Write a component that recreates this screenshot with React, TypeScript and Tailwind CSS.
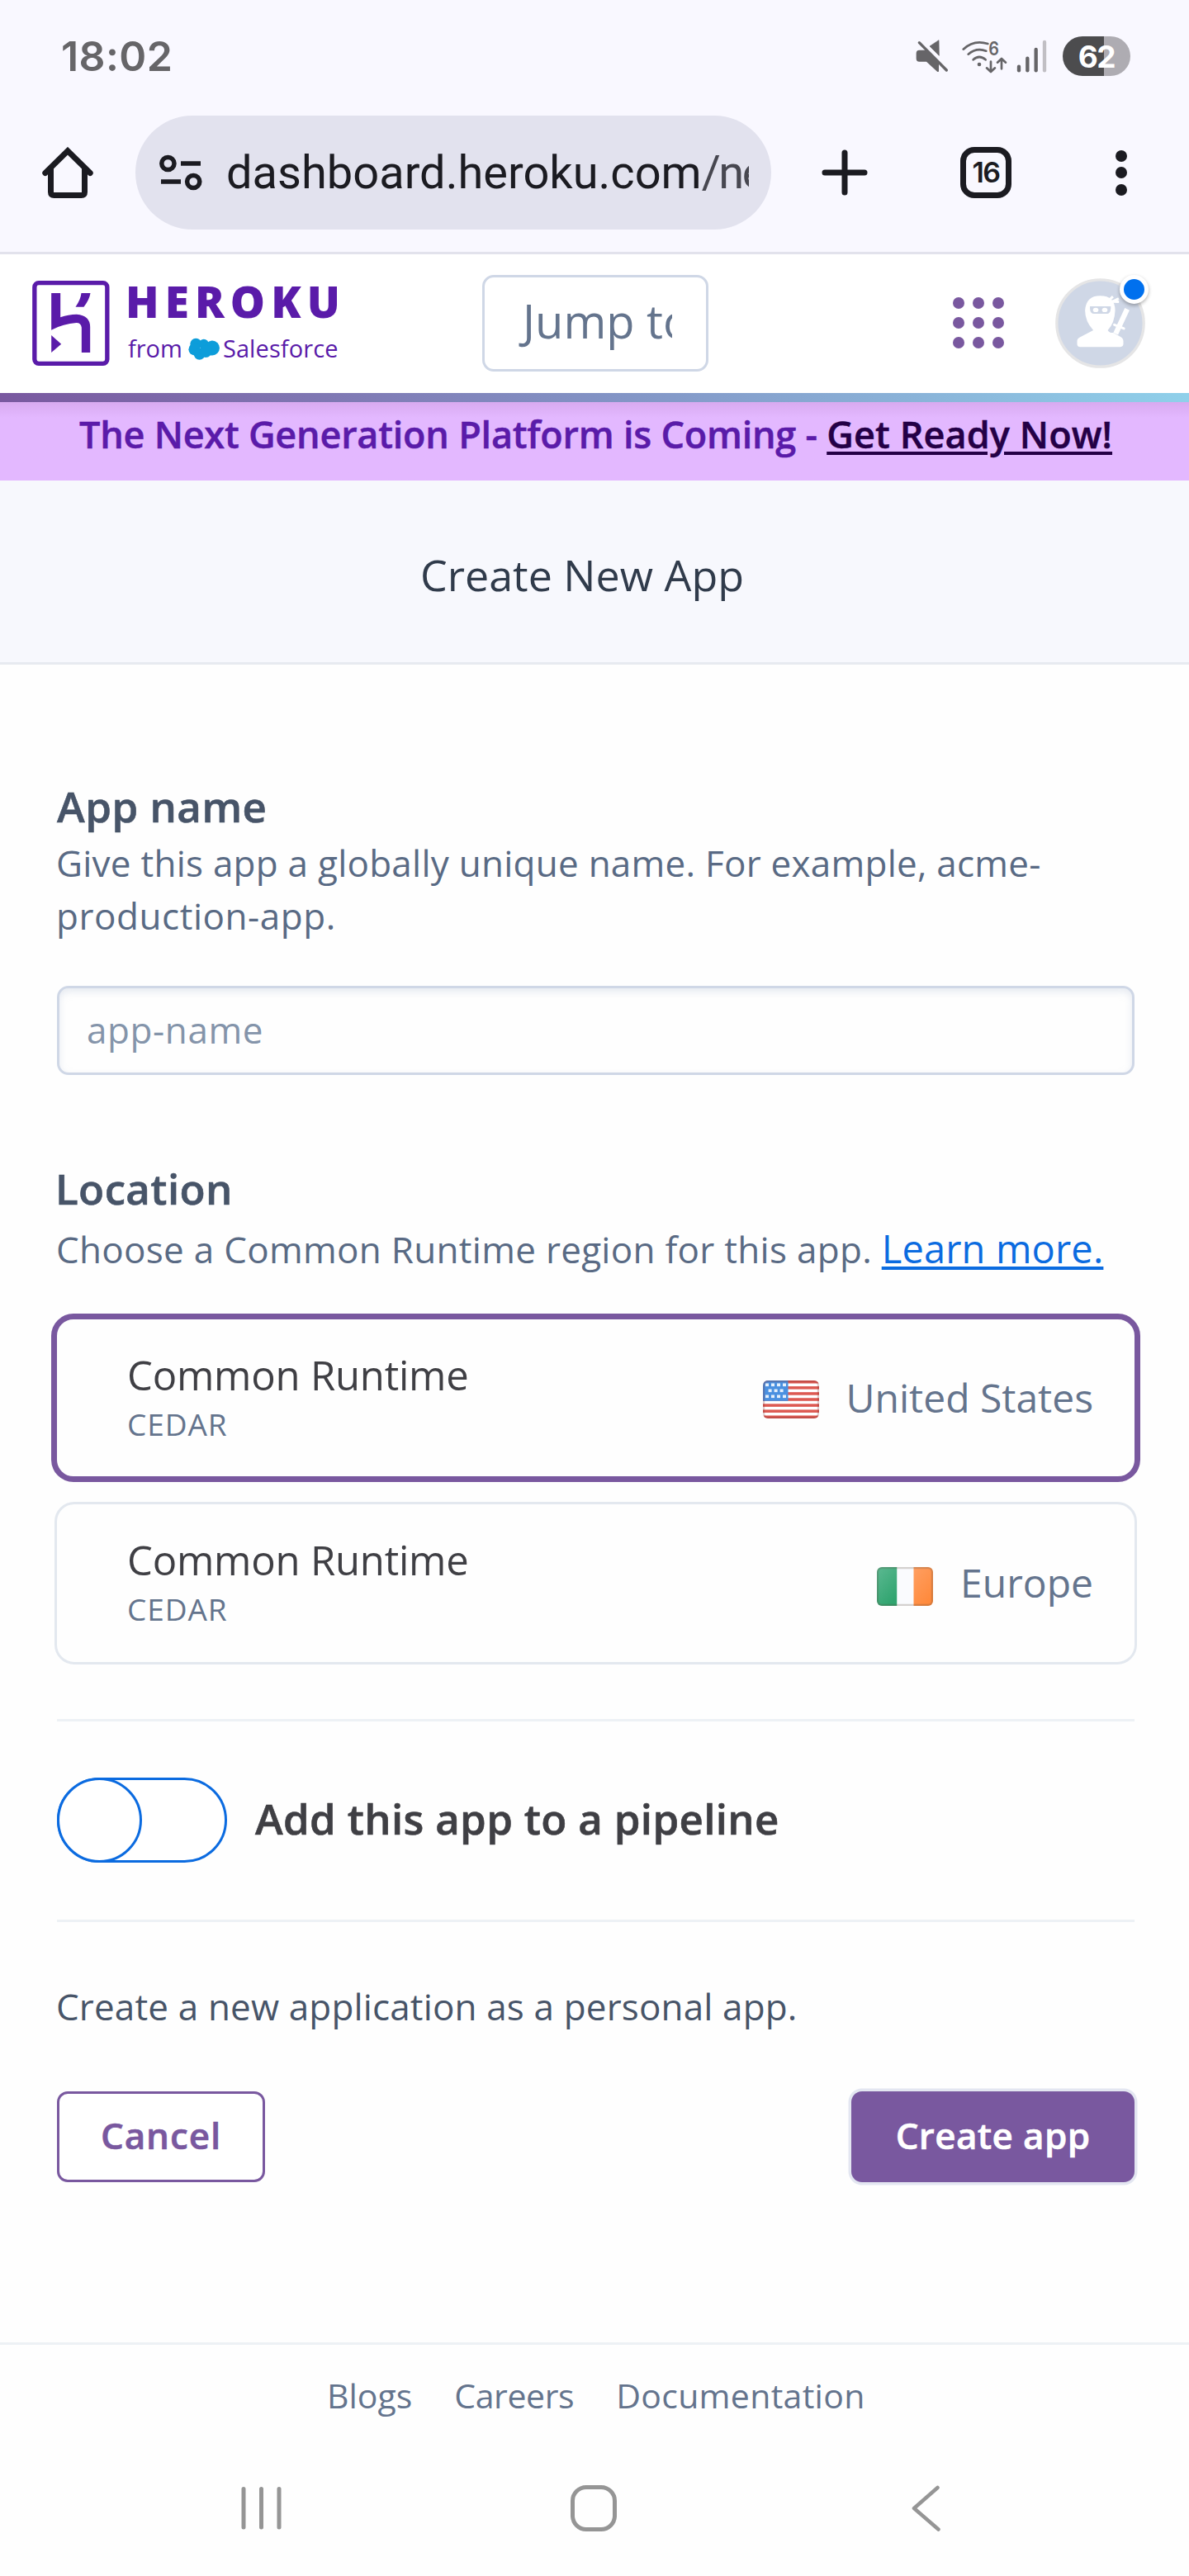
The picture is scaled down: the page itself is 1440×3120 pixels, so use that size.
import type { ReactNode } from 'react';

function MuteIcon() {
  return (
    <svg className="h-[40px] w-[40px]" viewBox="27 54 120 120" fill="#666568">
      <path d="M111 56 L78 78 L112 112 Z" stroke="#666568" strokeWidth="2" strokeLinejoin="round" />
      <path d="M40 92 H66 L111 138 V170 L106 171 L66 134 H40 Q29 134 29 122 V104 Q29 92 40 92 Z" />
      <path d="M40 65 L139 165" stroke="#666568" strokeWidth="10" strokeLinecap="round" />
    </svg>
  );
}

function WifiIcon() {
  return (
    <svg className="h-[41px] w-[55px] overflow-visible" viewBox="195 51 165 123" fill="none" stroke="#666568" strokeWidth="8" strokeLinecap="round" strokeLinejoin="round">
      <path d="M200 86 Q238 50 289 66" />
      <path d="M218 104 Q248 78 283 92" />
      <path d="M236 124 Q258 104 281 124" />
      <circle cx="258" cy="141" r="7" fill="#666568" stroke="none" />
      <text x="292" y="107" fill="#666568" stroke="none" fontFamily="Inter, sans-serif" fontWeight="600" fontSize="68" textLength="38" lengthAdjust="spacingAndGlyphs">6</text>
      <path d="M300 131 V167 M285 154 L300 168 L315 154" />
      <path d="M339 157 V120 M324 134 L339 120 L354 134" />
    </svg>
  );
}

function SignalIcon() {
  return (
    <svg className="h-[40px] w-[37px]" viewBox="393 52 111 120" stroke="#666568" strokeWidth="13" strokeLinecap="round">
      <path d="M402 150 V164" />
      <path d="M433 120 V164" />
      <path d="M464 88 V164" />
      <path d="M495 61 V164" stroke="#c1bfc4" />
    </svg>
  );
}

function StatusBar() {
  return (
    <div className="flex h-[136px] items-center pr-[71px] pl-[74px]">
      <span className="flex-1 font-[Inter,sans-serif] text-[50px] leading-none font-semibold tracking-[0.4px] text-[#666568]">18:02</span>
      <MuteIcon />
      <span className="ml-[16px]"><WifiIcon /></span>
      <span className="ml-[11px]"><SignalIcon /></span>
      <span className="ml-[19px] flex h-[48px] w-[82px] items-center justify-center rounded-full bg-linear-to-r from-[#4c4c4e] from-61% to-[#aeacb2] to-61% font-[Inter,sans-serif] text-[37px] leading-none font-bold tracking-[-1.5px] text-white">
        62
      </span>
    </div>
  );
}

function BrowserBar() {
  return (
    <div className="mt-[4px] flex h-[138px] items-center pl-[51px]">
      <svg className="h-[62px] w-[62px] shrink-0" viewBox="0 0 62 62" fill="none" stroke="#1b1b21" strokeWidth="7">
        <path d="M3.8 31.5 L31 4.8 L58.2 31.5" strokeLinecap="round" />
        <path d="M10.5 25 V54.5 Q10.5 58.5 14.5 58.5 H47.5 Q51.5 58.5 51.5 54.5 V25" />
      </svg>
      <div className="ml-[51px] flex h-[138px] w-[770px] items-center rounded-full bg-[#e2e2ee] pl-[29px]">
        <svg className="h-[44px] w-[53px] shrink-0" viewBox="0 0 53 44" fill="none" stroke="#1b1b21" strokeWidth="5.5">
          <circle cx="10.4" cy="11" r="7.6" />
          <path d="M26 11 H50 M2 33 H26" />
          <circle cx="41.2" cy="33" r="7.6" />
        </svg>
        <div className="ml-[28px] w-[633px] overflow-hidden font-[Roboto,sans-serif] text-[56px] leading-[80px] whitespace-nowrap text-[#1b1b21]">
          dashboard.heroku.com<span className="tracking-[-2.5px] text-[#474750]">/ne</span>
        </div>
      </div>
      <svg className="ml-[61px] h-[56px] w-[56px] shrink-0" viewBox="0 0 56 56" stroke="#1b1b21" strokeWidth="7" strokeLinecap="round">
        <path d="M28 4 V52 M4 28 H52" />
      </svg>
      <div className="ml-[112px] flex h-[62px] w-[62px] shrink-0 items-center justify-center rounded-[17px] border-[7px] border-[#1b1b21] font-[Inter,sans-serif] text-[34px] leading-none font-semibold tracking-[-1.5px] text-[#1b1b21]">
        16
      </div>
      <div className="ml-[126px] flex flex-col gap-[6.5px]">
        {[0, 1, 2].map((i) => (
          <span key={i} className="size-[14px] rounded-full bg-[#1b1b21]" />
        ))}
      </div>
    </div>
  );
}

function HerokuLogo() {
  return (
    <>
      <svg className="ml-[39px] h-[103px] w-[94px] shrink-0" viewBox="27 42 281 309" fill="#5a1ba9">
        <rect x="35" y="50" width="264" height="293" rx="15" fill="none" stroke="#5a1ba9" strokeWidth="16" />
        <path d="M96 87 H129 V175 Q158 164 188 164 Q237 168 237 210 V303 H206 V212 Q204 195 187 195 Q140 198 96 221 Z" />
        <path d="M96 240 L132 272 L96 303 Z" />
        <path d="M205 87 H238 Q234 112 214 137 H184 Q202 112 205 87 Z" />
      </svg>
      <div className="ml-[19px] flex flex-col pb-[4px] text-[#5a1ba9]">
        <span className="text-[53px] leading-[53px] font-extrabold tracking-[7.1px]">HEROKU</span>
        <div className="mt-[13px] ml-[3px] flex items-center text-[29px] leading-[36px]">
          <span>from</span>
          <svg className="ml-[7px] h-[27px] w-[38px]" viewBox="590 258 115 82" fill="#0d9dda">
            <circle cx="618" cy="281" r="21" />
            <circle cx="647" cy="281" r="18" />
            <circle cx="678" cy="296" r="27" />
            <circle cx="613" cy="301" r="22" />
            <circle cx="631" cy="318" r="21" />
            <circle cx="654" cy="308" r="23" />
          </svg>
          <span className="ml-[4px] tracking-[0.1px]">Salesforce</span>
        </div>
      </div>
    </>
  );
}

function NinjaAvatar() {
  return (
    <div className="relative ml-[62px] size-[109px] shrink-0">
      <svg className="size-[109px]" viewBox="533 917 329 329">
        <circle cx="697.5" cy="1081.5" r="159" fill="#cfd7e6" stroke="#e5e5e6" strokeWidth="10" />
        <path d="M672 1107 Q642 1075 642 1035 Q645 981 697 981 Q752 981 752 1035 Q750 1082 725 1107 Q731 1118 745 1116 L772 1131 Q782 1137 782 1147 V1158 Q781 1168 771 1168 H624 Q613 1168 613 1157 V1147 Q613 1138 623 1133 Z" fill="#fff" />
        <path d="M660 1020 H736 V1028 Q734 1047 722 1047 H675 Q661 1047 660 1028 Z" fill="#cfd7e6" />
        <ellipse cx="681" cy="1033" rx="10" ry="8" fill="#fff" />
        <ellipse cx="714" cy="1033" rx="10" ry="8" fill="#fff" />
        <path d="M731 996 L744 984 M738 1005 L765 991 M738 1002 L766 1003" stroke="#fff" strokeWidth="9" />
        <path d="M796 1030 L754 1120" stroke="#fff" strokeWidth="19" strokeLinejoin="round" />
        <path d="M749 1087 L784 1101" stroke="#fff" strokeWidth="9" strokeLinecap="round" />
      </svg>
      <span className="absolute top-[-4px] right-[-4px] size-[35px] rounded-full border-[5px] border-white bg-[#0070ee] shadow-[0_2px_4px_rgba(0,0,0,0.3)]" />
    </div>
  );
}

function HerokuNav() {
  return (
    <header>
      <div className="flex h-[168px] items-center bg-white pb-[2px]">
        <HerokuLogo />
        <div className="ml-auto flex items-center">
          <div className="flex h-[117px] w-[274px] items-center rounded-[14px] border-[3px] border-[#cfd7e6] bg-white pb-[6px] pl-[33px]">
            <div className="w-[194px] overflow-hidden pl-[13px] text-[56px] leading-[76px] whitespace-nowrap text-[#64748d]">Jump to</div>
          </div>
          <div className="ml-[296px] grid shrink-0 grid-cols-3 gap-[10px]">
            {Array.from({ length: 9 }, (_, i) => (
              <span key={i} className="size-[14px] rounded-full bg-[#79589f]" />
            ))}
          </div>
          <NinjaAvatar />
          <div className="w-[53px]" />
        </div>
      </div>
      <div className="h-[11px] bg-linear-to-r from-[#79589f] via-[#8292c4] to-[#8fd0ea]" />
    </header>
  );
}

function UsFlag() {
  return (
    <svg className="mt-[3px] h-[46px] w-[68px] overflow-hidden rounded-[6px]" viewBox="0 0 68 46">
      <rect width="68" height="46" fill="#fff" />
      {[0, 1, 2, 3, 4, 5, 6].map((i) => (
        <rect key={i} x="0" y={i * 7.08} width="68" height="3.54" fill="#dd5a52" />
      ))}
      <rect width="30.5" height="24.8" fill="#4a90e0" />
      {[3, 10, 17, 24].map((x) => (
        <g key={x} fill="#e6f0fb">
          <rect x={x} y="3.5" width="4" height="3.6" />
          <rect x={x} y="17.5" width="4" height="3.6" />
          {x < 24 && <rect x={x + 3.6} y="10.5" width="4" height="3.6" />}
        </g>
      ))}
      <rect x="1" y="1" width="66" height="44" rx="5" fill="none" stroke="#7a2a2a" strokeOpacity="0.25" strokeWidth="2.4" />
    </svg>
  );
}

function IrelandFlag() {
  return (
    <svg className="mt-[7px] h-[47px] w-[68px] overflow-hidden rounded-[6px]" viewBox="0 0 68 47">
      <defs>
        <linearGradient id="ie-green" x1="0" y1="0" x2="0.6" y2="1">
          <stop offset="0" stopColor="#5cb992" />
          <stop offset="1" stopColor="#30a46f" />
        </linearGradient>
        <linearGradient id="ie-orange" x1="0" y1="0" x2="0.6" y2="1">
          <stop offset="0" stopColor="#ff9f62" />
          <stop offset="1" stopColor="#ff8a3c" />
        </linearGradient>
      </defs>
      <rect width="24.5" height="47" fill="url(#ie-green)" />
      <rect x="24.5" width="20" height="47" fill="#fafbfe" />
      <rect x="44.5" width="23.5" height="47" fill="url(#ie-orange)" />
      <rect x="1" y="1" width="66" height="45" rx="5" fill="none" stroke="#5a4a3a" strokeOpacity="0.24" strokeWidth="2.4" />
    </svg>
  );
}

function RegionCard({ className, flag, name }: { className: string; flag: ReactNode; name: string }) {
  return (
    <div className={className}>
      <div className="flex-1 pt-[35px]">
        <div className="text-[49px] leading-[64px] tracking-[-0.2px] text-[#3f3f44]">Common Runtime</div>
        <div className="mt-[4px] text-[37px] leading-[48px] tracking-[0.9px] text-[#64748d]">CEDAR</div>
      </div>
      <div className="flex items-center gap-[33px]">
        {flag}
        <span className="mb-px text-[48px] leading-[64px] text-[#64748d]">{name}</span>
      </div>
    </div>
  );
}

function CreateAppForm() {
  return (
    <main className="pt-[139px] pr-[66px] pl-[69px]">
      <h2 className="text-[51px] leading-[64px] font-semibold tracking-[0.5px] text-[#475468] [-webkit-text-stroke:0.6px]">App name</h2>
      <p className="mt-[5px] -ml-px text-[44px] leading-[64px] tracking-[0.25px] text-[#596a84]">
        Give this app a globally unique name. For example, acme-
        <br />
        <span className="tracking-[0.55px]">production-app.</span>
      </p>
      <div className="mt-[53px] flex h-[108px] items-center rounded-[14px] border-[3px] border-[#cfd7e6] bg-[#fefefe] pb-[3px] pl-[33px] text-[44px] leading-[64px] tracking-[0.6px] text-[#8494aa] shadow-[inset_0_4px_8px_rgba(207,215,230,0.5)]">
        app-name
      </div>

      <h2 className="mt-[105px] -ml-[2px] text-[51px] leading-[64px] font-semibold tracking-[0.4px] text-[#475468] [-webkit-text-stroke:0.6px]">Location</h2>
      <p className="mt-[10px] -ml-px h-[64px] text-[44px] leading-[64px] tracking-[0.29px] whitespace-nowrap text-[#596a84]">
        Choose a Common Runtime region for this app.{' '}
        <a className="text-[47px] leading-[60px] tracking-[0.15px] text-[#0b6be0] underline decoration-[4px] underline-offset-[4px]">Learn more.</a>
      </p>
      <RegionCard
        className="mt-[46px] -mr-[7px] -ml-[7px] flex h-[204px] rounded-[27px] border-[7px] border-[#79589f] pr-[50px] pl-[85px]"
        flag={<UsFlag />}
        name="United States"
      />
      <RegionCard
        className="mt-[24px] -mr-[3px] -ml-[3px] flex h-[197px] rounded-[24px] border-[3px] border-[#e3e8ef] pr-[50px] pl-[85px]"
        flag={<IrelandFlag />}
        name="Europe"
      />

      <div className="mt-[66px] h-[3px] bg-[#edf1f5]" />
      <div className="mt-[68px] flex h-[103px] items-center">
        <div className="flex h-[103px] w-[206px] rounded-full border-[3px] border-[#0b6be0] bg-white">
          <span className="-mt-[3px] -ml-[3px] size-[103px] rounded-full border-[3px] border-[#0b6be0] bg-white" />
        </div>
        <span className="ml-[34px] pb-[5px] text-[51px] leading-[64px] font-semibold tracking-[0.32px] text-[#3f3f44] [-webkit-text-stroke:0.6px]">Add this app to a pipeline</span>
      </div>
      <div className="mt-[69px] h-[3px] bg-[#edf1f5]" />

      <p className="mt-[70px] -ml-px text-[44px] leading-[64px] tracking-[0.15px] text-[#475468]">Create a new application as a personal app.</p>
      <div className="mt-[71px] flex justify-between">
        <button className="h-[110px] w-[252px] rounded-[13px] border-[3px] border-[#79589f] bg-white pb-[4px] text-[44px] leading-[64px] font-semibold tracking-[0.9px] text-[#79589f] [-webkit-text-stroke:0.6px]">
          Cancel
        </button>
        <button className="h-[110px] w-[343px] rounded-[13px] bg-[#79589f] pb-[4px] text-[44px] leading-[64px] font-semibold tracking-[0.35px] text-white shadow-[0_0_0_3.5px_#e3e6f1] [-webkit-text-stroke:0.6px]">
          Create app
        </button>
      </div>
    </main>
  );
}

export default function App() {
  return (
    <div className="h-[3120px] w-[1440px] overflow-hidden bg-[#fefefe] font-['Open_Sans',sans-serif]">
      <div className="h-[308px] border-b-[3px] border-[#e2e2ec] bg-[#f9f8ff]">
        <StatusBar />
        <BrowserBar />
      </div>
      <HerokuNav />
      <div className="h-[95px] bg-[#e3b8ff] bg-linear-to-b from-[#d8aaf0] to-[#e3b8ff] to-20% pt-[9px] pl-[3px] text-center text-[45px] leading-[60px] font-semibold tracking-[-0.23px] whitespace-nowrap text-[#5a1ba9] [-webkit-text-stroke:0.5px]">
        The Next Generation Platform is Coming -{' '}
        <a className="tracking-[0.1px] text-[#240046] underline decoration-[4px] underline-offset-[4px]">Get Ready Now!</a>
      </div>
      <div className="h-[223px] border-b-[3px] border-[#e7eaf0] bg-[#f7f8fd] pt-[79px] pl-[509px] text-[52px] leading-[70px] text-[#303b4b]">
        Create New App
      </div>
      <CreateAppForm />
      <footer className="mt-[194px] border-t-[3px] border-[#edf1f5] pt-[33px]">
        <div className="flex gap-[51px] pl-[396px] text-[41px] leading-[56px] text-[#64748d]">
          <a>Blogs</a>
          <a className="tracking-[-0.4px]">Careers</a>
          <a className="tracking-[0.3px]">Documentation</a>
        </div>
      </footer>
      <nav className="mt-[81px] flex items-center pl-[292px]">
        <svg className="h-[56px] w-[50px]" viewBox="0 0 50 56" stroke="#959595" strokeWidth="5" strokeLinecap="round">
          <path d="M3 4.5 V51 M24.5 4.5 V51 M46 4.5 V51" />
        </svg>
        <div className="ml-[349px] size-[56px] rounded-[19px] border-[5px] border-[#959595]" />
        <svg className="ml-[357px] h-[56px] w-[36px]" viewBox="0 0 36 56" fill="none" stroke="#959595" strokeWidth="4.5" strokeLinecap="round" strokeLinejoin="round">
          <path d="M31.5 3 L3 28 L32.5 53.5" />
        </svg>
      </nav>
    </div>
  );
}
